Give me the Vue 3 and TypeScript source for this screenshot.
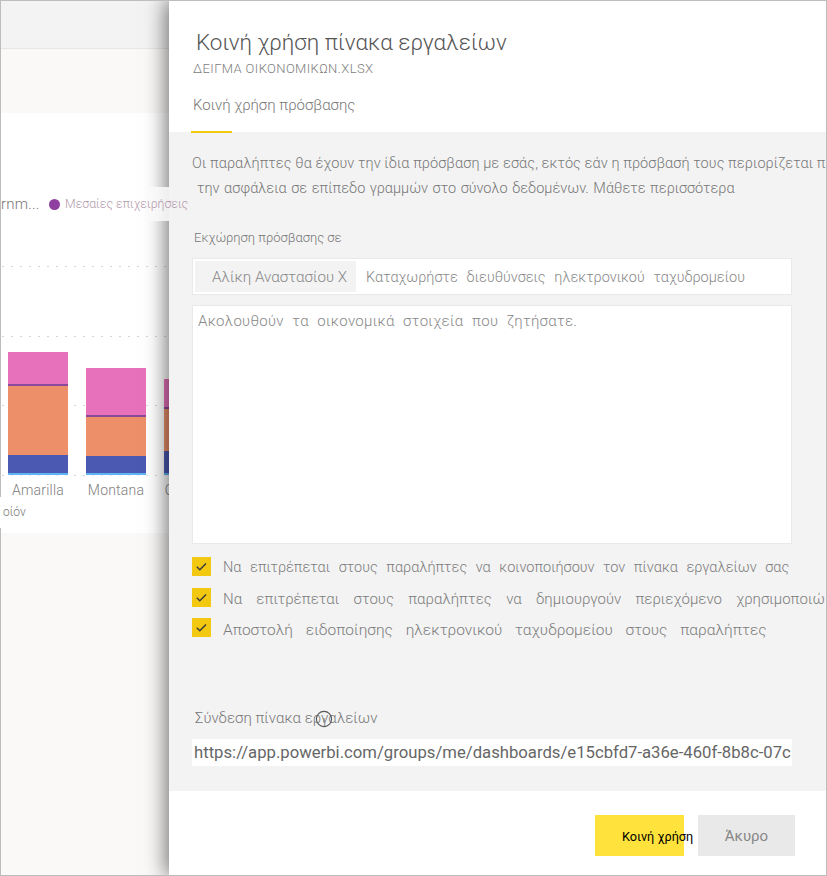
<script setup lang="ts">
interface Bar { name: string; pink: number; purple: number; orange: number; blue: number }
const bars: Bar[] = [
  { name: 'Amarilla', pink: 32, purple: 2, orange: 69, blue: 18 },
  { name: 'Montana', pink: 47, purple: 2, orange: 39, blue: 17 },
  { name: 'Carretera', pink: 28, purple: 2, orange: 42, blue: 22 },
]
const checks: { text: string; cls: string }[] = [
  { text: 'Να επιτρέπεται στους παραλήπτες να κοινοποιήσουν τον πίνακα εργαλείων σας', cls: 'r1' },
  { text: 'Να επιτρέπεται στους παραλήπτες να δημιουργούν περιεχόμενο χρησιμοποιώ', cls: 'r2' },
  { text: 'Αποστολή ειδοποίησης ηλεκτρονικού ταχυδρομείου στους παραλήπτες', cls: 'r3' },
]
</script>

<template>
  <div class="screen">
    <div class="topbar"></div>
    <div class="band"></div>
    <div class="card">
      <div class="legend">
        <span class="legend-cut">rnm...</span>
      </div>
      <div class="plot">
        <div class="gridline g1"></div>
        <div class="gridline g2"></div>
        <div class="gridline g3"></div>
        <div class="gridline g4"></div>
        <div class="bars">
          <div v-for="b in bars" :key="b.name" class="col">
            <div class="stack">
              <div class="seg pink" :style="{ height: b.pink + 'px' }"></div>
              <div class="seg purple" :style="{ height: b.purple + 'px' }"></div>
              <div class="seg orange" :style="{ height: b.orange + 'px' }"></div>
              <div class="seg blue" :style="{ height: b.blue + 'px' }"></div>
              <div class="seg sky"></div>
            </div>
            <div class="xlabel">{{ b.name }}</div>
          </div>
        </div>
      </div>
    </div>
    <div class="band fill"></div>

    <aside class="panel">
      <header class="head">
        <h1 class="title">Κοινή χρήση πίνακα εργαλείων</h1>
        <div class="subtitle">ΔΕΙΓΜΑ ΟΙΚΟΝΟΜΙΚΩΝ.XLSX</div>
        <div class="tab">Κοινή χρήση πρόσβασης</div>
        <div class="tab-line"></div>
      </header>
      <section class="body">
        <p class="intro one">Οι παραλήπτες θα έχουν την ίδια πρόσβαση με εσάς, εκτός εάν η πρόσβασή τους περιορίζεται π</p>
        <p class="intro two">την ασφάλεια σε επίπεδο γραμμών στο σύνολο δεδομένων. Μάθετε περισσότερα</p>
        <div class="grant">Εκχώρηση πρόσβασης σε</div>
        <div class="recipients">
          <span class="chip">Αλίκη Αναστασίου X</span>
          <span class="placeholder">Καταχωρήστε διευθύνσεις ηλεκτρονικού ταχυδρομείου</span>
        </div>
        <div class="message">Ακολουθούν τα οικονομικά στοιχεία που ζητήσατε.</div>
        <div class="checks">
          <label v-for="c in checks" :key="c.cls" class="check" :class="c.cls">
            <span class="box">
              <svg width="19" height="19" viewBox="0 0 19 19"><path d="M4.8 9.8l3 3 6.2-6.4" fill="none" stroke="#3a3a3a" stroke-width="1.4" /></svg>
            </span>
            <span class="check-text">{{ c.text }}</span>
          </label>
        </div>
        <div class="link-label">
          Σύνδεση πίνακα εργαλείων
          <svg class="info" width="18" height="18" viewBox="0 0 18 18"><circle cx="9" cy="9" r="7.6" fill="none" stroke="#555" stroke-width="1.1" /><path d="M9 8v4.6" stroke="#777" stroke-width="1" /></svg>
        </div>
        <div class="url">https://app.powerbi.com/groups/me/dashboards/e15cbfd7-a36e-460f-8b8c-07c</div>
      </section>
      <footer class="foot">
        <button class="btn share"><span>Κοινή χρήση</span></button>
        <button class="btn cancel">Άκυρο</button>
      </footer>
    </aside>
    <div class="frame"></div>

    <div class="legend-tip">
      <span class="dot"></span>
      <span class="legend-text">Μεσαίες επιχειρήσεις</span>
    </div>
    <div class="axis-title">οίόν</div>
  </div>
</template>

<style scoped>
.screen {
  position: relative;
  width: 827px;
  height: 876px;
  overflow: hidden;
  background: #fff;
  display: flex;
  flex-direction: column;
  font-family: Roboto, "Noto Sans", sans-serif;
  font-weight: 300;
  color: #777;
}
.topbar { height: 48px; flex: none; background: #f3f3f3; border-bottom: 1px solid #e6e6e6; }
.band { height: 64px; flex: none; background: #faf9f8; }
.band.fill { flex: 1; }
.card { height: 420px; flex: none; background: #fff; display: flex; flex-direction: column; position: relative; }
.legend { display: flex; align-items: center; height: 34px; margin-top: 74px; white-space: nowrap; }
.legend-cut { font-size: 15px; color: #777; margin-left: 1px; letter-spacing: .2px; }
.legend-tip {
  position: absolute;
  left: 49px;
  top: 187px;
  height: 34px;
  display: flex;
  align-items: center;
  white-space: nowrap;
  background: linear-gradient(to right, transparent 0, transparent 96px, rgba(250, 250, 250, .85) 96px, rgba(250, 250, 250, .85) 120px, transparent 120px);
}
.dot { width: 11px; height: 11px; border-radius: 50%; background: #8f3f9f; flex: none; margin-right: 5px; }
.legend-text { color: #b39aac; font-size: 12.3px; }
.plot { position: relative; height: 272px; }
.gridline { position: absolute; left: 2px; right: 0; height: 1px; background: repeating-linear-gradient(to right, #d4d4d4 0 2px, transparent 2px 9px); }
.g1 { top: 45px; }
.g2 { top: 115px; }
.g3 { top: 184px; }
.g4 { top: 254px; }
.bars { position: absolute; left: 8px; bottom: 0; display: flex; gap: 18px; height: 100%; align-items: flex-end; }
.col { width: 60px; display: flex; flex-direction: column; align-items: center; flex: none; }
.stack { width: 60px; display: flex; flex-direction: column; outline: 1px solid rgba(255, 255, 255, .5); }
.seg { flex: none; }
.pink { background: #e871bb; }
.purple { background: #8a4a9c; }
.orange { background: #ed9069; }
.blue { background: #4c59b3; }
.sky { height: 2px; background: #5fb4f5; }
.xlabel { height: 18px; line-height: 30px; font-size: 14px; color: #808080; white-space: nowrap; letter-spacing: .2px; }
.axis-title {
  position: absolute;
  left: 0;
  top: 497px;
  width: 30px;
  height: 31px;
  box-sizing: border-box;
  padding-left: 3px;
  background: #fff;
  font-size: 12px;
  line-height: 31px;
  color: #777;
}

.panel {
  position: absolute;
  left: 169px;
  top: 0;
  width: 658px;
  height: 876px;
  display: flex;
  flex-direction: column;
  background: #fff;
  box-shadow: -3px 0 20px rgba(0, 0, 0, .55);
  overflow: hidden;
}
.head { height: 132px; flex: none; padding-left: 24px; position: relative; }
.title { margin: 26px 0 0 3px; font-size: 22.4px; line-height: 32px; font-weight: 300; color: #555; white-space: nowrap; }
.subtitle { font-size: 13px; line-height: 16px; margin-top: 3px; color: #808080; letter-spacing: .4px; }
.tab { font-size: 15px; line-height: 20px; margin-top: 18px; color: #777; }
.tab-line { position: absolute; left: 22px; bottom: -1px; width: 41px; height: 2px; background: #f2c811; }
.body { height: 659px; flex: none; background: #f3f3f3; padding: 0 0 0 23px; display: flex; flex-direction: column; white-space: nowrap; }
.intro { margin: 0; font-size: 14.5px; line-height: 20px; color: #777; }
.intro.one { margin-top: 22px; letter-spacing: .08px; }
.intro.two { margin: 5px 0 0 5px; word-spacing: 1px; }
.grant { margin: 29px 0 0 2px; font-size: 13px; line-height: 20px; color: #777; }
.recipients {
  margin-top: 10px;
  width: 600px;
  height: 37px;
  box-sizing: border-box;
  border: 1px solid #e9e9e9;
  background: #fff;
  display: flex;
  align-items: center;
  padding-left: 2px;
  font-size: 14.5px;
}
.chip { width: 161px; height: 31px; box-sizing: border-box; padding-left: 17px; line-height: 33px; background: #f3f3f3; color: #888; flex: none; font-size: 15.2px; }
.placeholder { margin-left: 10px; color: #888; word-spacing: 5.2px; padding-top: 2px; }
.message {
  margin-top: 10px;
  width: 600px;
  height: 239px;
  box-sizing: border-box;
  border: 1px solid #e9e9e9;
  background: #fff;
  padding: 5px 5px;
  font-size: 15px;
  line-height: 20px;
  color: #888;
  letter-spacing: .3px;
  word-spacing: 4.5px;
}
.checks { margin-top: 13px; display: flex; flex-direction: column; gap: 12px; }
.check { display: flex; align-items: center; height: 19px; gap: 12px; }
.check.r3 { margin-top: -1px; }
.box { width: 19px; height: 19px; background: #f2c811; flex: none; display: block; }
.box svg { display: block; }
.check-text { color: #7c7c7c; padding-top: 2px; }
.r1 .check-text { font-size: 14.5px; word-spacing: 5px; }
.r2 .check-text { font-size: 15px; word-spacing: 10.6px; }
.r3 .check-text { font-size: 15.5px; word-spacing: 9px; padding-top: 5px; }
.link-label { position: relative; margin: 71px 0 0 3px; font-size: 15px; line-height: 20px; color: #777; }
.info { position: absolute; left: 120px; top: 2px; }
.url { margin-top: 11px; width: 600px; height: 27px; line-height: 27px; background: #fff; font-size: 16.7px; font-weight: 400; color: #666; overflow: hidden; padding-left: 2px; box-sizing: border-box; }
.foot { flex: 1; display: flex; align-items: flex-start; padding: 24px 0 0 426px; gap: 14px; }
.btn { border: 0; padding: 1px 0 0; height: 41px; font-family: inherit; font-size: 15px; flex: none; }
.share { width: 89px; background: #ffe33c; color: #000; text-align: left; white-space: nowrap; font-weight: 400; }
.share span { margin-left: 27px; font-size: 12.7px; }
.cancel { width: 97px; background: #e9e9e9; color: #888; }
.frame { position: absolute; inset: 0; border: 1px solid #bdbdbd; pointer-events: none; }
</style>
